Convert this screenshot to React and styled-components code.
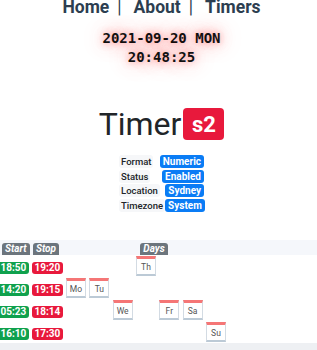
import React from "react";
import styled, { createGlobalStyle } from "styled-components";

const GlobalStyle = createGlobalStyle`
  html, body {
    margin: 0;
    padding: 0;
    background: #fff;
    overflow: hidden;
  }
  body {
    font-family: Roboto, "Liberation Sans", sans-serif;
    color: #212529;
  }
`;

const Page = styled.div`
  width: 317px;
  height: 350px;
  overflow: hidden;
`;

const Header = styled.header`
  display: flex;
  flex-direction: column;
  align-items: center;
  padding-left: 6px;
`;

const Nav = styled.nav`
  display: flex;
  align-items: center;
  height: 15px;
  line-height: 15px;
  font-size: 17.5px;
  font-weight: 700;
  color: #2c3e50;

  .sep {
    font-weight: 400;
    margin: 0 12px 0 8px;
  }
`;

const Clock = styled.div`
  margin-top: 14px;
  font-family: "DejaVu Sans Mono", "Liberation Mono", monospace;
  font-size: 14px;
  font-weight: 700;
  line-height: 19px;
  text-align: center;
  color: #111;
  text-shadow: 0 0 6px rgba(255, 90, 90, 0.5), 0 0 14px rgba(255, 100, 100, 0.55),
    0 0 24px rgba(255, 120, 120, 0.45);
`;

const Title = styled.h1`
  display: flex;
  align-items: center;
  gap: 2px;
  height: 38px;
  margin: 38px 0 0;
  font-size: 32px;
  font-weight: 400;
  color: #212529;
`;

const TitleBadge = styled.span`
  display: flex;
  align-items: center;
  justify-content: center;
  width: 41px;
  height: 32px;
  border-radius: 4px;
  background: #e8193c;
  color: #fff;
  font-size: 22px;
  font-weight: 700;
`;

const Info = styled.div`
  display: flex;
  flex-direction: column;
  gap: 1.5px;
  width: 85px;
  margin-top: 12px;
`;

const InfoRow = styled.div`
  display: flex;
  justify-content: space-between;
`;

const Label = styled.span`
  height: 13px;
  line-height: 13px;
  padding: 0 2px;
  border-radius: 3px;
  background: #f6f7f9;
  font-size: 9.5px;
  font-weight: 500;
  color: #212529;
`;

const Value = styled.span`
  height: 13px;
  line-height: 13px;
  padding: 0 3px;
  border-radius: 3px;
  background: #0a7cf5;
  color: #fff;
  font-size: 10px;
  font-weight: 700;
`;

const Schedule = styled.section`
  margin-top: 28px;
`;

const Row = styled.div`
  display: grid;
  grid-template-columns: 32px 30px 184px 1fr;
  align-items: center;
  height: ${(p) => (p.$head ? "15px" : "22px")};
  background: ${(p) => (p.$head ? "#f5f7fb" : "transparent")};
`;

const HeadCell = styled.div`
  display: flex;
  justify-content: ${(p) => (p.$center ? "center" : "flex-start")};
  align-self: end;
  padding-left: ${(p) => p.$pad || 0}px;
`;

const HeadBadge = styled.span`
  height: 12px;
  line-height: 12px;
  padding: 0 3px;
  border-radius: 3px 3px 0 0;
  background: #6c757d;
  color: #fff;
  font-size: 10px;
  font-weight: 700;
  font-style: italic;
`;

const TimeCell = styled.div`
  margin-left: ${(p) => p.$shift || 0}px;
`;

const TimeBadge = styled.span`
  display: inline-block;
  height: 12px;
  line-height: 12px;
  padding: 0 2.5px;
  border-radius: 3px;
  background: ${(p) => (p.$stop ? "#e8193c" : "#0fa14d")};
  color: #fff;
  font-size: 10px;
  font-weight: 700;
`;

const Days = styled.div`
  display: grid;
  grid-template-columns: repeat(7, 20px);
  column-gap: 3.33px;
  padding-left: 4px;
`;

const Day = styled.span`
  grid-column: ${(p) => p.$col};
  display: flex;
  align-items: center;
  justify-content: center;
  box-sizing: border-box;
  width: 20px;
  height: 20px;
  padding-top: 1px;
  background: #fff;
  border: 1px solid #d3dbe3;
  border-top: 3px solid #f57676;
  border-bottom: 2px solid #bccad6;
  font-size: 8.5px;
  color: #555;
`;

const Foot = styled.div`
  height: 8px;
  background: #eef0f3;
`;

const DAY_NAMES = ["Mo", "Tu", "We", "Th", "Fr", "Sa", "Su"];

const timers = [
  { start: "18:50", stop: "19:20", days: [3] },
  { start: "14:20", stop: "19:15", days: [0, 1] },
  { start: "05:23", stop: "18:14", days: [2, 4, 5] },
  { start: "16:10", stop: "17:30", days: [6] },
];

const info = [
  ["Format", "Numeric"],
  ["Status", "Enabled"],
  ["Location", "Sydney"],
  ["Timezone", "System"],
];

const App = () => {
  return (
    <Page>
      <GlobalStyle />
      <Header>
        <Nav>
          <span>Home</span>
          <span className="sep">|</span>
          <span>About</span>
          <span className="sep">|</span>
          <span>Timers</span>
        </Nav>
        <Clock>
          <div>2021-09-20 MON</div>
          <div>20:48:25</div>
        </Clock>
        <Title>
          Timer<TitleBadge>s2</TitleBadge>
        </Title>
        <Info>
          {info.map(([k, v]) => (
            <InfoRow key={k}>
              <Label>{k}</Label>
              <Value>{v}</Value>
            </InfoRow>
          ))}
        </Info>
      </Header>

      <Schedule>
        <Row $head>
          <HeadCell $pad={2}>
            <HeadBadge>Start</HeadBadge>
          </HeadCell>
          <HeadCell $pad={1}>
            <HeadBadge>Stop</HeadBadge>
          </HeadCell>
          <HeadCell $center>
            <HeadBadge>Days</HeadBadge>
          </HeadCell>
          <div />
        </Row>
        {timers.map((t) => (
          <Row key={t.start}>
            <TimeCell $shift={-2}>
              <TimeBadge>{t.start}</TimeBadge>
            </TimeCell>
            <TimeCell>
              <TimeBadge $stop>{t.stop}</TimeBadge>
            </TimeCell>
            <Days>
              {t.days.map((d) => (
                <Day key={d} $col={d + 1}>
                  {DAY_NAMES[d]}
                </Day>
              ))}
            </Days>
            <div />
          </Row>
        ))}
        <Foot />
      </Schedule>
    </Page>
  );
};

export default App;
